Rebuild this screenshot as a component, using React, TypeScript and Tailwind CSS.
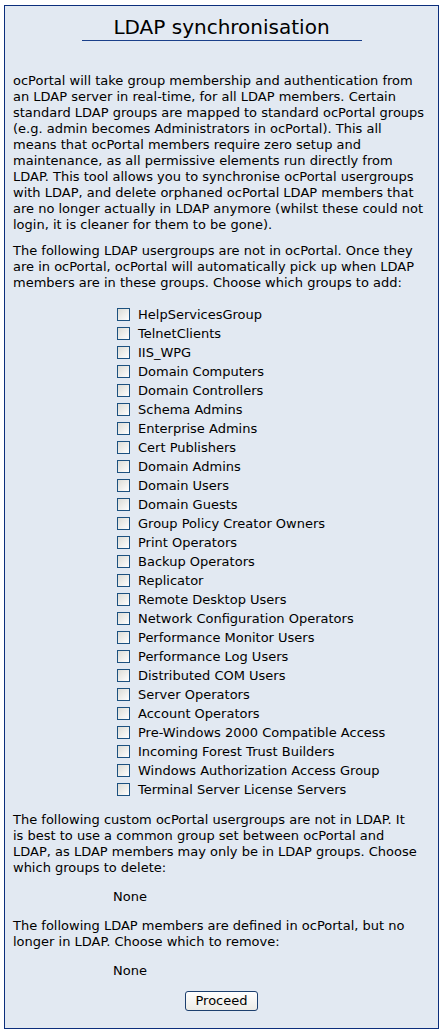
import React from "react";

const groups = [
  "HelpServicesGroup",
  "TelnetClients",
  "IIS_WPG",
  "Domain Computers",
  "Domain Controllers",
  "Schema Admins",
  "Enterprise Admins",
  "Cert Publishers",
  "Domain Admins",
  "Domain Users",
  "Domain Guests",
  "Group Policy Creator Owners",
  "Print Operators",
  "Backup Operators",
  "Replicator",
  "Remote Desktop Users",
  "Network Configuration Operators",
  "Performance Monitor Users",
  "Performance Log Users",
  "Distributed COM Users",
  "Server Operators",
  "Account Operators",
  "Pre-Windows 2000 Compatible Access",
  "Incoming Forest Trust Builders",
  "Windows Authorization Access Group",
  "Terminal Server License Servers",
];

const para1 = [
  "ocPortal will take group membership and authentication from",
  "an LDAP server in real-time, for all LDAP members. Certain",
  "standard LDAP groups are mapped to standard ocPortal groups",
  "(e.g. admin becomes Administrators in ocPortal). This all",
  "means that ocPortal members require zero setup and",
  "maintenance, as all permissive elements run directly from",
  "LDAP. This tool allows you to synchronise ocPortal usergroups",
  "with LDAP, and delete orphaned ocPortal LDAP members that",
  "are no longer actually in LDAP anymore (whilst these could not",
  "login, it is cleaner for them to be gone).",
];

const para2 = [
  "The following LDAP usergroups are not in ocPortal. Once they",
  "are in ocPortal, ocPortal will automatically pick up when LDAP",
  "members are in these groups. Choose which groups to add:",
];

const para3 = [
  "The following custom ocPortal usergroups are not in LDAP. It",
  "is best to use a common group set between ocPortal and",
  "LDAP, as LDAP members may only be in LDAP groups. Choose",
  "which groups to delete:",
];

const para4 = [
  "The following LDAP members are defined in ocPortal, but no",
  "longer in LDAP. Choose which to remove:",
];

function Lines({ lines, className }: { lines: string[]; className?: string }) {
  return (
    <p className={"whitespace-nowrap " + (className ?? "")}>
      {lines.map((l, i) => (
        <React.Fragment key={i}>
          {l}
          {i < lines.length - 1 && <br />}
        </React.Fragment>
      ))}
    </p>
  );
}

function Box() {
  return (
    <span className="inline-block w-[13px] h-[13px] border border-[#1c5180] bg-gradient-to-br from-[#dcdcd6] to-[#ffffff] shrink-0" />
  );
}

export default function App() {
  return (
    <div className="bg-white min-h-[1035px] pt-[5px] pl-[4px]" style={{ fontFamily: '"DejaVu Sans", Verdana, sans-serif' }}>
      <div className="w-[435px] h-[1024px] border border-[#0b2e7c] bg-[#e2e9f2] text-[13px] leading-[16px] text-black px-[8px]">
        <div className="flex flex-col items-center pt-[9px]">
          <h1 className="text-[20px] leading-[24px] font-normal">LDAP synchronisation</h1>
          <div className="w-[280px] h-px bg-[#1a3f8a] mt-[1px]" />
        </div>
        <Lines lines={para1} className="mt-[32px]" />
        <Lines lines={para2} className="mt-[10px]" />
        <div className="mt-[14px] pl-[104px] flex flex-col">
          {groups.map((g) => (
            <label key={g} className="flex items-center h-[19px] gap-[8px]">
              <Box />
              <span>{g}</span>
            </label>
          ))}
        </div>
        <Lines lines={para3} className="mt-[13px]" />
        <div className="mt-[13px] pl-[100px]">None</div>
        <Lines lines={para4} className="mt-[13px]" />
        <div className="mt-[13px] pl-[100px]">None</div>
        <div className="flex justify-center mt-[12px]">
          <button className="h-[20px] px-[9px] border border-[#1c3f6e] rounded-[3px] bg-gradient-to-b from-[#ffffff] to-[#ecebe6] text-[13px] leading-[16px] text-black">
            Proceed
          </button>
        </div>
      </div>
    </div>
  );
}
